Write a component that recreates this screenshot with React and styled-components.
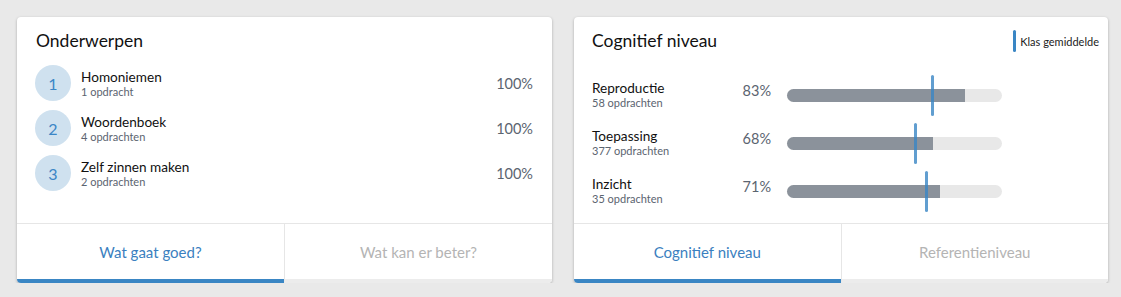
import React from 'react';
import styled, { createGlobalStyle } from 'styled-components';

const GlobalStyle = createGlobalStyle`
  body {
    margin: 0;
    background: #e9e9e9;
    font-family: Lato, "Open Sans", sans-serif;
  }
`;

const Page = styled.div`
  display: flex;
  gap: 22px;
  padding: 17px 0 0 17px;
`;

const Card = styled.div`
  flex-shrink: 0;
  width: ${p => p.$width}px;
  height: 266px;
  background: #fff;
  border-radius: 4px;
  box-shadow: 0 1px 3px rgba(0, 0, 0, 0.28);
  display: flex;
  flex-direction: column;
  overflow: hidden;
`;

const Body = styled.div`
  flex: 1;
  padding: 13px 9px 0 ${p => p.$left || 19}px;
`;

const Header = styled.div`
  display: flex;
  justify-content: space-between;
  align-items: flex-start;
`;

const Title = styled.h2`
  margin: 1px 0 0;
  font-size: 17.5px;
  line-height: 20px;
  font-weight: 400;
  color: #111;
`;

const Legend = styled.div`
  display: flex;
  align-items: center;
  gap: 4px;
  font-size: 11px;
  color: #222;
`;

const LegendMark = styled.span`
  width: 3px;
  height: 22px;
  border-radius: 2px;
  background: #3a86c4;
`;

const TopicList = styled.div`
  margin-top: 14px;
  padding-right: 10px;
  display: flex;
  flex-direction: column;
  gap: 9px;
`;

const TopicRow = styled.div`
  display: flex;
  align-items: center;
`;

const Circle = styled.div`
  width: 36px;
  height: 36px;
  margin-left: -1px;
  border-radius: 50%;
  background: #cfe1ef;
  color: #3b86c6;
  font-size: 16px;
  display: flex;
  align-items: center;
  justify-content: center;
`;

const Info = styled.div`
  flex: 1;
  margin-left: ${p => p.$offset || 0}px;
`;

const Name = styled.div`
  font-size: 13.6px;
  line-height: 16px;
  color: #111;
`;

const Sub = styled.div`
  font-size: 11px;
  line-height: 13px;
  color: #5b6470;
`;

const Percent = styled.div`
  font-size: 14.5px;
  line-height: 17px;
  color: #5b6470;
`;

const LevelList = styled.div`
  margin-top: 28px;
  display: flex;
  flex-direction: column;
  gap: 19px;
`;

const LevelRow = styled.div`
  display: flex;
  align-items: flex-start;
`;

const LevelInfo = styled.div`
  width: 140px;
`;

const LevelPercent = styled(Percent)`
  width: 39px;
  margin-top: 2px;
  text-align: right;
`;

const Track = styled.div`
  position: relative;
  width: 215px;
  height: 13px;
  margin: 9px 0 0 16px;
  border-radius: 7px;
  background: #e8e8e8;
`;

const Fill = styled.div`
  height: 100%;
  border-radius: 7px 0 0 7px;
  background: #8b929b;
`;

const Marker = styled.span`
  position: absolute;
  top: -14px;
  width: 3px;
  height: 41px;
  margin-left: -1px;
  border-radius: 2px;
  background: rgba(58, 134, 196, 0.8);
`;

const Tabs = styled.div`
  display: flex;
  border-top: 1px solid #e6e6e6;
`;

const Tab = styled.div`
  flex: 1;
  height: 55px;
  display: flex;
  align-items: center;
  justify-content: center;
  font-size: 15px;
  color: ${p => (p.$active ? '#3b7fc0' : '#b4b4b4')};
  border-bottom: 4px solid ${p => (p.$active ? '#3a86c4' : '#ececec')};
  & + & {
    border-left: 1px solid #e6e6e6;
  }
`;

const topics = [
  { name: 'Homoniemen', sub: '1 opdracht', pct: '100%' },
  { name: 'Woordenboek', sub: '4 opdrachten', pct: '100%' },
  { name: 'Zelf zinnen maken', sub: '2 opdrachten', pct: '100%' },
];

const levels = [
  { name: 'Reproductie', sub: '58 opdrachten', pct: 83, avg: 67.4 },
  { name: 'Toepassing', sub: '377 opdrachten', pct: 68, avg: 59.5 },
  { name: 'Inzicht', sub: '35 opdrachten', pct: 71, avg: 64.7 },
];

const App = () => {
  return (
    <>
      <GlobalStyle />
      <Page>
        <Card $width={535}>
          <Body>
            <Header>
              <Title>Onderwerpen</Title>
            </Header>
            <TopicList>
              {topics.map((t, i) => (
                <TopicRow key={t.name}>
                  <Circle>{i + 1}</Circle>
                  <Info $offset={10}>
                    <Name>{t.name}</Name>
                    <Sub>{t.sub}</Sub>
                  </Info>
                  <Percent>{t.pct}</Percent>
                </TopicRow>
              ))}
            </TopicList>
          </Body>
          <Tabs>
            <Tab $active>Wat gaat goed?</Tab>
            <Tab>Wat kan er beter?</Tab>
          </Tabs>
        </Card>
        <Card $width={534}>
          <Body $left={18}>
            <Header>
              <Title>Cognitief niveau</Title>
              <Legend>
                <LegendMark />
                Klas gemiddelde
              </Legend>
            </Header>
            <LevelList>
              {levels.map(l => (
                <LevelRow key={l.name}>
                  <LevelInfo>
                    <Name>{l.name}</Name>
                    <Sub>{l.sub}</Sub>
                  </LevelInfo>
                  <LevelPercent>{l.pct}%</LevelPercent>
                  <Track>
                    <Fill style={{ width: `${l.pct}%` }} />
                    <Marker style={{ left: `${l.avg}%` }} />
                  </Track>
                </LevelRow>
              ))}
            </LevelList>
          </Body>
          <Tabs>
            <Tab $active>Cognitief niveau</Tab>
            <Tab>Referentieniveau</Tab>
          </Tabs>
        </Card>
      </Page>
    </>
  );
};

export default App;
